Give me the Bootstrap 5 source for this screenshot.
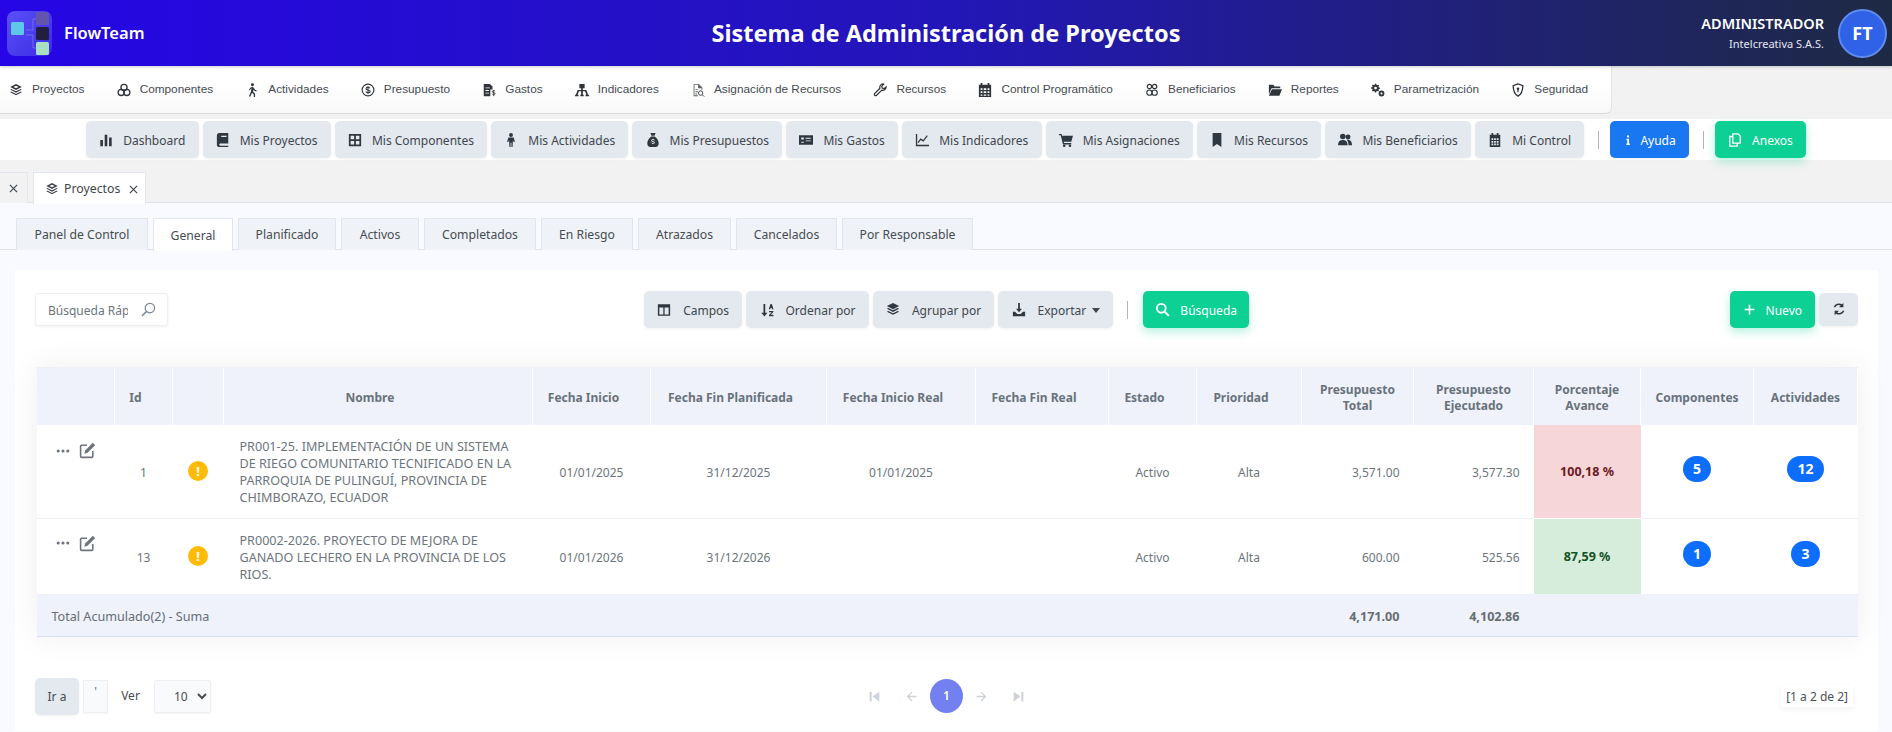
<!DOCTYPE html>
<html lang="es">
<head>
<meta charset="utf-8">
<title>FlowTeam</title>
<link href="https://cdn.jsdelivr.net/npm/bootstrap@5.3.0/dist/css/bootstrap.min.css" rel="stylesheet">
<style>
html,body{height:732px;overflow:hidden}
body{background:#f2f2f2;font-family:"Noto Sans",sans-serif;font-size:12px;color:#6c757d}
.ic{width:14px;height:14px;flex:none;fill:currentColor}
.topbar{height:66px;background:linear-gradient(90deg,#2606e6 0%,#2316b8 50%,#1e2a44 100%);color:#fff;padding:0 5px 0 7px;box-shadow:0 1px 3px rgba(0,0,0,.2);position:relative}
.logo-box{width:45px;height:45px;border-radius:8px;background:linear-gradient(135deg,#5a50f5,#3a2ce8);flex:none}
.brand-name{font-size:16.5px;font-weight:600;margin-left:12px;width:164px}
.sys-title{font-size:23.5px;font-weight:700;flex:1;text-align:center;padding-top:1px;white-space:nowrap}
.user-col{text-align:right;margin-right:14px;width:160px}
.user-name{font-size:14.5px;font-weight:600;line-height:18px}
.user-org{font-size:11px;line-height:18px;margin-top:3px;color:#e6e6f2}
.avatar{width:49px;height:49px;border-radius:50%;background:#2f62e6;border:2px solid #5f8bee;color:#fff;font-weight:700;font-size:18px}
.menu-wrap{height:53px}
.main-menu{width:1612px;height:48px;background:linear-gradient(#fff 0%,#fff 40%,#f8f8f8 100%);border-bottom:1px solid #d8d8d8;border-right:1px solid #e4e4e4;border-bottom-right-radius:6px;padding-left:9px;font-family:"Liberation Sans",sans-serif;font-size:11.8px;color:#444a50}
.menu-item{display:flex;align-items:center;gap:9px;color:#454b52;text-decoration:none;white-space:nowrap;margin-right:32.2px}
.menu-item .ic{width:14px;height:14px;color:#30353b}
.quick-band{height:41px;background:#fff}
.act-btn{height:37px;background:#e3e9ef;border:0;border-radius:5px;padding:2px 13.2px 0;font-size:12px;color:#3f464d;display:inline-flex;align-items:center;gap:10px;white-space:nowrap;box-shadow:0 1px 3px rgba(0,0,0,.06)}
.act-btn:hover{background:#e3e9ef;color:#3f464d}
.act-btn .ic{color:#2f3740;margin-top:-2px}
.act-blue{background:#1a77f2;color:#fff;gap:7px}
.act-blue .ic{color:#fff;width:10px}
.act-blue:hover{background:#1a77f2;color:#fff}
.act-green{background:#0cd094;color:#fff;box-shadow:0 4px 10px rgba(12,208,148,.3)}
.act-green .ic{color:#fff}
.act-green:hover{background:#0cd094;color:#fff}
.vsep{width:1px;height:18px;background:#adb5bd;margin:0 7px 0 10px}
.vsep-t{margin:0 11px 0 10px}
.tab-strip{height:43px;padding-top:12px;border-bottom:1px solid #dfe4ee;gap:5px}
.doc-tab{height:31px;display:flex;align-items:center;border:1px solid #e2e6ee;border-bottom:0;background:#f2f2f2;color:#3f464d}
.doc-tab-x{width:28px;justify-content:center;border-left:0}
.doc-tab-on{width:113px;background:#fff;padding:2px 0 0 11px;gap:5px;margin-bottom:-1px;height:32px;font-size:12.3px}
.doc-tab-on .ic{width:14px;height:14px;margin-top:-2px}
.x-ic{width:9px;height:9px;stroke:#3f464d;stroke-width:1.3;fill:none}
.pane{height:529px;background:#f8faff}
.sub-tabs{height:47px;padding:15px 0 0 16px;gap:5px;border-bottom:1px solid #dee2e6}
.sub-tab{height:32px;display:flex;align-items:center;justify-content:center;background:#eff2f6;border:1px solid #e2e6ec;border-bottom:0;color:#454c53;font-size:12.2px;padding-top:2px}
.sub-on{background:#fff;height:33px}
.w1{width:132px}.w2{width:80px}.w3{width:98px}.w4{width:78px}.w5{width:112px}.w6{width:92px}.w7{width:93px}.w8{width:101px}.w9{width:131px}
.sheet{margin:20px 14px 0 15px;height:461px;background:#fff;padding:21px 20px 0}
.tool-grid{display:grid;grid-template-columns:1fr auto 1fr;align-items:center;height:37px;gap:0}
.quick-search{width:133px;height:33px;border:1px solid #edf0f3;border-radius:3px;box-shadow:0 1px 3px rgba(0,0,0,.06);padding:2px 11px 0 12px;background:#fff}
.quick-input{width:80px;border:0;outline:0;padding:0;background:transparent;font-size:12px;color:#6c757d;font-family:inherit}
.quick-input::placeholder{color:#6c757d;opacity:1}
.quick-search .ic{color:#7b8794;width:15px;height:15px;margin-top:-2px}
.tb-btn{gap:12px}
.sheet .act-green{gap:10px;padding-left:12px;padding-right:12px}
.sheet .act-green .ic{width:15px;height:15px}
.sheet .plus-btn{padding-left:13px;padding-right:13px}
.sheet .plus-btn .ic{width:13px;height:13px}
.caret-btn::after{content:"";border-top:5px solid currentColor;border-left:4.5px solid transparent;border-right:4.5px solid transparent;margin-left:-6px;margin-top:-1px}
.refresh{width:39px;height:33px;justify-content:center;padding:0;margin-left:4px}
.tbl-shell{margin:39px 0 0 1.5px;box-shadow:0 0 30px rgba(0,0,0,.07);border-top:1px solid #eef0f5}
.data-grid{width:100%;table-layout:fixed;border-collapse:collapse;font-size:12px;color:#6c757d;background:#fff}
.data-grid th{background:#eff2fa;color:#69727c;font-weight:700;font-size:12px;line-height:16px;text-align:center;vertical-align:middle;height:57px;border-right:1px solid #fff;padding:2px 4px 0}
.data-grid th.sp{padding-right:20px}
.data-grid td{vertical-align:middle;text-align:center;border-bottom:1px solid #eef0f6;padding:2px 14px 0;line-height:17px}
.r1 td{height:93px}.r2 td{height:76px}
.data-grid td.lf{text-align:left;padding:2px 20px 0 16px;font-size:12.6px}
.data-grid td.rt{text-align:right}
.data-grid td.pct-bad{background:#f7d6d9;color:#6a1a21;font-weight:700;padding:0;border-bottom:1px solid #fff;font-size:12.5px}
.data-grid td.pct-ok{background:#d5edda;color:#135224;font-weight:700;padding:0;border-bottom:0;font-size:12.5px}
.data-grid tfoot td{background:#eff2fa;height:42px;border-bottom:1px solid #d9e2ee;font-weight:700;color:#666d74;font-size:12.6px}
.data-grid tfoot td.tl{text-align:left;font-weight:400;padding-left:15px}
.data-grid td.act-cell{padding:0}
.act-ics{display:flex;align-items:center;gap:9px;padding-left:19px;color:#6c757d}
.pad-a{padding-top:17px}
.pad-b{padding-top:16px}
.act-ics .ic{width:17px;height:17px}
.act-ics .dots{width:14px;height:14px}
.warn-dot{width:20px;height:20px;border-radius:50%;background:#ffbb07;color:#fff;font-weight:700;font-size:13px;line-height:20px;display:inline-block;text-align:center}
.count-pill{display:inline-block;background:#0d6efd;color:#fff;font-weight:700;font-size:14px;line-height:26px;border-radius:13px;padding:0 10px;position:relative;top:-3px;min-width:24px}
.pager{display:grid;grid-template-columns:1fr auto 1fr;align-items:center;margin-top:41px;height:37px}
.goto{width:44px;justify-content:center;padding:2px 0 0;color:#454c53;font-size:12px}
.page-in{width:25px;height:33px;border:1px solid #edf0f3;background:#f9fafb;margin-left:4px;text-align:center;line-height:22px;color:#6c757d;box-shadow:0 1px 2px rgba(0,0,0,.04)}
.ver-lb{width:39px;text-align:center;margin:0 4px 0 3px;color:#454c53;background:#fff}
.sel{width:57px;height:33px;padding:0 0 0 15px;border:1px solid #edf0f3;border-radius:2px;background:#f9fafb;color:#454c53;font-size:12px;font-family:inherit;box-shadow:0 1px 2px rgba(0,0,0,.05)}
.pg-icons{color:#cdd3db;gap:0}
.pg-icons .ic{width:13px;height:13px}
.pg-now{width:33px;height:34px;border-radius:50%;background:#7380f0;color:#fff;font-weight:600;margin:0 12px}
.pg-summary{justify-self:end;padding:3px 5px 1px;margin-right:5px;color:#495057;font-size:12px;background:#fff;box-shadow:0 2px 6px rgba(0,0,0,.06)}
.c-a{width:78px}.c-b{width:58px}.c-c{width:51px}.c-d{width:309px}.c-e{width:118px}.c-f{width:176px}.c-g{width:149px}.c-h{width:133px}.c-i{width:88px}.c-j{width:105px}.c-k{width:112px}.c-l{width:120px}.c-m{width:107px}.c-n{width:113px}.c-o{width:104px}
</style>
</head>
<body>
<svg width="0" height="0" class="position-absolute">
<symbol id="i-layers" viewBox="0 0 16 16"><path d="M8 1 1.500 4.500 8 8l6.500-3.500zM8 3l3 1.500-3 1.500-3-1.500z" fill-rule="evenodd"/><path d="M2.500 6.800 1.500 7.500 8 11l6.500-3.500-1-.7L8 9.500zM2.500 9.800l-1 .7L8 14l6.500-3.500-1-.7L8 12.500z"/></symbol>
<symbol id="i-comp" viewBox="0 0 16 16"><g fill="none" stroke="currentColor" stroke-width="1.500"><circle cx="8" cy="5" r="3.500"/><circle cx="4.800" cy="10.800" r="3.500"/><circle cx="11.200" cy="10.800" r="3.500"/></g></symbol>
<symbol id="i-walk" viewBox="0 0 16 16"><circle cx="8.500" cy="2" r="1.700"/><path d="M8.600 4.300 6 5.500 4.600 8l1 .5 1-2 .9-.3L6.700 10 4.500 15l1.400.6L8 11l2 2v3h1.500v-3.600L9.300 10l.5-2.500.8 1.300 2.400.8.400-1.200-2-.7-1.200-2.100z"/></symbol>
<symbol id="i-dollar" viewBox="0 0 16 16"><circle cx="8" cy="8" r="6.700" fill="none" stroke="currentColor" stroke-width="1.300"/><path d="M10.300 6.200C10 5.200 9 4.900 8 4.900c-1.300 0-2.300.6-2.300 1.600C5.700 8.800 10.500 7.400 10.500 9.600c0 1-1.100 1.500-2.500 1.500-1.200 0-2.100-.5-2.400-1.500M8 3.500v9" fill="none" stroke="currentColor" stroke-width="1.200"/></symbol>
<symbol id="i-gasto" viewBox="0 0 16 16"><path d="M2 1h7l3 3v3.500H9.500V15H2zM4 5v1h5V5zM4 8v1h4V8zM4 11v1h4v-1z" fill-rule="evenodd"/><path d="M15 9.500c-.3-.6-1-.8-1.700-.8-1 0-1.700.5-1.700 1.200 0 1.600 3.500.8 3.500 2.300 0 .7-.8 1.100-1.800 1.100-.8 0-1.500-.3-1.800-1M13.300 8v7" fill="none" stroke="currentColor" stroke-width="1"/></symbol>
<symbol id="i-ind" viewBox="0 0 16 16"><path d="M5 1h6v5H9v2h4l2 5.500h1V15h-4v-1.500h1L11.500 9.500H9v4h1V15H6v-1.500h1v-4H4.500L3 13.500h1V15H0v-1.500h1L3 8h4V6H5z"/></symbol>
<symbol id="i-asig" viewBox="0 0 16 16"><path d="M3 1h6l4 4v3h-1V6H8V2H4v12h4v1H3zM5 7h3v1H5zM5 9.500h3v1H5zM5 12h2v1H5z" opacity=".75"/><circle cx="11" cy="11.500" r="2.500" fill="none" stroke="currentColor"/><path d="m13 13.500 2 2" stroke="currentColor"/></symbol>
<symbol id="i-wrench" viewBox="0 0 16 16"><path d="M11.500 1a3.800 3.800 0 0 0-3.600 5L1.800 12.100a1.500 1.500 0 0 0 2.100 2.100L10 8.100A3.800 3.800 0 0 0 15 4.500l-2.300 2-2.200-.7-.5-2.200 2.200-2.300z" fill="none" stroke="currentColor" stroke-width="1.400"/></symbol>
<symbol id="i-cal" viewBox="0 0 16 16"><path d="M3 0h2v2h6V0h2v2h2v14H1V2h2zM3 6v2h2V6zm3.500 0v2h3V6zM11 6v2h2V6zM3 9.500v2h2v-2zm3.500 0v2h3v-2zm4.500 0v2h2v-2zM3 13v1.500h2V13zm3.500 0v1.500h3V13zm4.500 0v1.500h2V13z" fill-rule="evenodd"/></symbol>
<symbol id="i-benef" viewBox="0 0 16 16"><g fill="none" stroke="currentColor" stroke-width="1.300"><circle cx="5" cy="4" r="2.500"/><circle cx="11" cy="4" r="2.500"/><circle cx="5" cy="11" r="3"/><circle cx="11" cy="11" r="3"/></g></symbol>
<symbol id="i-folder" viewBox="0 0 16 16"><path d="M1 2h5l1.500 2H14v2H4L1 13zM4.500 7H16l-3 7.500H1z"/></symbol>
<symbol id="i-gears" viewBox="0 0 16 16"><path d="M5.500 1h2l.3 1.600 1.500.7 1.300-.9 1 1.300-.9 1.300.5 1.500L13 6.800v1.500l-1.800.3-.6 1.300.9 1.400-1.300 1-1.300-.9-1.400.6-.3 1.500H5.500l-.3-1.700-1.300-.5-1.500.9-1-1.300 1-1.400-.6-1.300L0 8V6.500l1.800-.3.600-1.500-1-1.300 1.300-1.200 1.400 1 1.300-.6zM6.500 5.300a2 2 0 1 0 0 4 2 2 0 0 0 0-4z" fill-rule="evenodd" transform="scale(.8)"/><circle cx="12" cy="12" r="3.300"/><circle cx="12" cy="12" r="1.200" fill="#fff"/></symbol>
<symbol id="i-shield" viewBox="0 0 16 16"><path d="M8 1 2.500 3c0 5 .5 9 5.500 12 5-3 5.500-7 5.500-12z" fill="none" stroke="currentColor" stroke-width="1.500"/><circle cx="8" cy="6.500" r="1.500"/><path d="M7.300 7h1.400v3.500H7.300z"/></symbol>
<symbol id="i-bars" viewBox="0 0 16 16"><path d="M1.500 8h3v7h-3zM6.500 2h3v13h-3zM11.500 5h3v10h-3z"/></symbol>
<symbol id="i-book" viewBox="0 0 16 16"><path d="M4 0h10v12H4.500a1.500 1.500 0 0 0 0 2.500H14V16H4a3 3 0 0 1-3-3V3a3 3 0 0 1 3-3zm2 3v1.500h6V3z" fill-rule="evenodd"/></symbol>
<symbol id="i-grid" viewBox="0 0 16 16"><path d="M1 1h14v14H1zM3 3v4h4V3zm6 0v4h4V3zM3 9v4h4V9zm6 0v4h4V9z" fill-rule="evenodd"/></symbol>
<symbol id="i-person" viewBox="0 0 16 16"><circle cx="8" cy="2.300" r="2.200"/><path d="M5 5h6l1.500 5-1.500.3-.8-2.300-.4 8H8.500V11h-1v5H6.200l-.4-8L5 10.300 3.500 10z"/></symbol>
<symbol id="i-bag" viewBox="0 0 16 16"><path d="M5 0h6l-1.300 3H6.300zM6 4h4c3 2 4.500 5 4.500 8 0 2.500-1.500 4-3.500 4H5c-2 0-3.500-1.500-3.500-4 0-3 1.500-6 4.500-8z"/><path d="M9.700 8.200c-.3-.6-1-.8-1.700-.8-1 0-1.700.5-1.700 1.200 0 1.600 3.500.8 3.500 2.300 0 .7-.8 1.100-1.800 1.100-.8 0-1.500-.3-1.800-1" fill="none" stroke="#fff" stroke-width="1"/></symbol>
<symbol id="i-card" viewBox="0 0 16 16"><path d="M0 2.500h16v11H0zM2.500 5v2.500h3V5zM7.500 5.500v1h6v-1zM7.500 8.500v1h6v-1zM2.500 10v1h3v-1z" fill-rule="evenodd"/></symbol>
<symbol id="i-chart" viewBox="0 0 16 16"><path d="M1 1h1.500v12.500H16V15H1z"/><path d="m3.500 11 3-4 3 2 4.500-6" fill="none" stroke="currentColor" stroke-width="1.400"/></symbol>
<symbol id="i-cart" viewBox="0 0 16 16"><path d="M0 1h3l.5 2H16l-2 7H5.500l.3 1.500H14V13H4.500L2 2.500H0z"/><circle cx="6" cy="14.500" r="1.500"/><circle cx="12.500" cy="14.500" r="1.500"/></symbol>
<symbol id="i-mark" viewBox="0 0 16 16"><path d="M3 0h10v16l-5-3.500L3 16z"/></symbol>
<symbol id="i-people" viewBox="0 0 16 16"><circle cx="5.500" cy="4" r="3.200"/><circle cx="11.500" cy="4.500" r="2.800"/><path d="M0 14c0-4 2-6 5.500-6S11 10 11 14zM12 14c0-2.500-.6-4.500-2-6 4-1 6 2 6 6z"/></symbol>
<symbol id="i-calf" viewBox="0 0 16 16"><path d="M4 0h2v2h4V0h2v2h2v14H2V2h2zM4 6v2h2V6zm3 0v2h2V6zm3 0v2h2V6zM4 9v2h2V9zm3 0v2h2V9zm3 0v2h2V9zM4 12v2h2v-2zm3 0v2h2v-2zm3 0v2h2v-2z" fill-rule="evenodd"/></symbol>
<symbol id="i-info" viewBox="0 0 16 16"><circle cx="8" cy="2.200" r="1.800"/><path d="M5.500 6h4.200v7.500h1.300V16H5.500v-2.500h1.300v-5H5.500z"/></symbol>
<symbol id="i-copy" viewBox="0 0 16 16"><g fill="none" stroke="currentColor" stroke-width="1.500"><path d="M5.500 1h6l2.500 2.500V11.500H5.500z"/><path d="M5.500 4H2v11h8.500v-3.500"/></g></symbol>
<symbol id="i-cols" viewBox="0 0 16 16"><path d="M1 1.500h14v13H1zM2.700 5v8h4.500V5zm6 0v8h4.600V5z" fill-rule="evenodd"/></symbol>
<symbol id="i-sort" viewBox="0 0 16 16"><path d="M4 1h2v10h2.500L5 15.500 1.500 11H4zM10 7l2-6h1.500l2 6h-1.500l-.3-1h-1.900l-.3 1zM10.300 9h5v1.300l-3 3.200h3V15h-5v-1.300l3-3.200h-3z"/></symbol>
<symbol id="i-stack" viewBox="0 0 16 16"><path d="M8 0 1 3.500 8 7l7-3.500z"/><path d="m2.700 5.600-1.700 1L8 10.200l7-3.600-1.700-1L8 8.300z"/><path d="m2.700 9-1.700 1L8 13.500 15 10l-1.700-1L8 11.700z"/></symbol>
<symbol id="i-dl" viewBox="0 0 16 16"><path d="M7 0h2v6.500h2.500L8 10.500l-3.500-4H7z"/><path d="M1 10h2.500l2.500 2.500h4l2.500-2.500H15v5H1z"/></symbol>
<symbol id="i-search" viewBox="0 0 16 16"><circle cx="6.700" cy="6.700" r="4.700" fill="none" stroke="currentColor" stroke-width="2"/><path d="m10.300 10.300 4.500 4.500" stroke="currentColor" stroke-width="2.200"/></symbol>
<symbol id="i-searchl" viewBox="0 0 16 16"><circle cx="9.500" cy="6.500" r="5" fill="none" stroke="currentColor" stroke-width="1.300"/><path d="m6 10-5 5" stroke="currentColor" stroke-width="1.600"/></symbol>
<symbol id="i-plus" viewBox="0 0 16 16"><path d="M7 2h2v5h5v2H9v5H7V9H2V7h5z"/></symbol>
<symbol id="i-sync" viewBox="0 0 16 16"><path d="M13 1v5H8l2-2a4.500 4.500 0 0 0-6.300 2H1.800A6.500 6.500 0 0 1 11.500 2.700zM3 15v-5h5l-2 2a4.500 4.500 0 0 0 6.300-2h1.900a6.500 6.500 0 0 1-9.700 3.300z"/></symbol>
<symbol id="i-dots" viewBox="0 0 16 16"><circle cx="2.500" cy="8" r="1.800"/><circle cx="8" cy="8" r="1.800"/><circle cx="13.500" cy="8" r="1.800"/></symbol>
<symbol id="i-edit" viewBox="0 0 16 16"><path d="M7.500 3H2.500A1 1 0 0 0 1.500 4v9.500a1 1 0 0 0 1 1H12a1 1 0 0 0 1-1V8.500" fill="none" stroke="currentColor" stroke-width="1.500"/><path d="M13 .8 15.200 3 8 10.200l-3 .8.800-3z"/></symbol>
<symbol id="i-first" viewBox="0 0 16 16"><path d="M2 2h2.500v12H2zM14 2v12L5.500 8z"/></symbol>
<symbol id="i-last" viewBox="0 0 16 16"><path d="M11.500 2H14v12h-2.500zM2 2v12l8.500-6z"/></symbol>
<symbol id="i-prev" viewBox="0 0 16 16"><path d="M8 2 2 8l6 6 1.200-1.200L5.200 8.900H14V7.100H5.200l4-3.900z"/></symbol>
<symbol id="i-next" viewBox="0 0 16 16"><path d="m8 2 6 6-6 6-1.200-1.200 4-3.900H2V7.100h8.800l-4-3.900z"/></symbol>
<symbol id="i-x" viewBox="0 0 10 10"><path d="m1 1 8 8M9 1 1 9"/></symbol>
</svg>

<header class="topbar d-flex align-items-center">
  <div class="logo-box">
    <svg width="45" height="45" viewBox="0 0 45 45"><path d="M19 19h7V8h4M19 24h7v13h4" fill="none" stroke="#7d78e0" stroke-width=".8"/><rect x="4" y="11" width="13" height="13" rx="1.500" fill="#5ec8e8"/><rect x="29" y="1" width="13" height="13" rx="1.500" fill="#6355ad"/><rect x="29" y="16" width="13" height="13" rx="1.500" fill="#211f3d"/><rect x="29" y="31" width="13" height="13" rx="1.500" fill="#a9dfc3"/></svg>
  </div>
  <div class="brand-name">FlowTeam</div>
  <div class="sys-title">Sistema de Administración de Proyectos</div>
  <div class="user-col">
    <div class="user-name">ADMINISTRADOR</div>
    <div class="user-org">Intelcreativa S.A.S.</div>
  </div>
  <div class="avatar d-flex align-items-center justify-content-center">FT</div>
</header>

<div class="menu-wrap">
<nav class="main-menu d-flex align-items-center">
  <a class="menu-item" href="#"><svg class="ic"><use href="#i-layers"/></svg>Proyectos</a>
  <a class="menu-item" href="#"><svg class="ic"><use href="#i-comp"/></svg>Componentes</a>
  <a class="menu-item" href="#"><svg class="ic"><use href="#i-walk"/></svg>Actividades</a>
  <a class="menu-item" href="#"><svg class="ic"><use href="#i-dollar"/></svg>Presupuesto</a>
  <a class="menu-item" href="#"><svg class="ic"><use href="#i-gasto"/></svg>Gastos</a>
  <a class="menu-item" href="#"><svg class="ic"><use href="#i-ind"/></svg>Indicadores</a>
  <a class="menu-item" href="#"><svg class="ic"><use href="#i-asig"/></svg>Asignación de Recursos</a>
  <a class="menu-item" href="#"><svg class="ic"><use href="#i-wrench"/></svg>Recursos</a>
  <a class="menu-item" href="#"><svg class="ic"><use href="#i-cal"/></svg>Control Programático</a>
  <a class="menu-item" href="#"><svg class="ic"><use href="#i-benef"/></svg>Beneficiarios</a>
  <a class="menu-item" href="#"><svg class="ic"><use href="#i-folder"/></svg>Reportes</a>
  <a class="menu-item" href="#"><svg class="ic"><use href="#i-gears"/></svg>Parametrización</a>
  <a class="menu-item" href="#"><svg class="ic"><use href="#i-shield"/></svg>Seguridad</a>
</nav>
</div>

<div class="quick-band d-flex align-items-center justify-content-center gap-1">
  <button class="btn act-btn"><svg class="ic"><use href="#i-bars"/></svg>Dashboard</button>
  <button class="btn act-btn"><svg class="ic"><use href="#i-book"/></svg>Mis Proyectos</button>
  <button class="btn act-btn"><svg class="ic"><use href="#i-grid"/></svg>Mis Componentes</button>
  <button class="btn act-btn"><svg class="ic"><use href="#i-person"/></svg>Mis Actividades</button>
  <button class="btn act-btn"><svg class="ic"><use href="#i-bag"/></svg>Mis Presupuestos</button>
  <button class="btn act-btn"><svg class="ic"><use href="#i-card"/></svg>Mis Gastos</button>
  <button class="btn act-btn"><svg class="ic"><use href="#i-chart"/></svg>Mis Indicadores</button>
  <button class="btn act-btn"><svg class="ic"><use href="#i-cart"/></svg>Mis Asignaciones</button>
  <button class="btn act-btn"><svg class="ic"><use href="#i-mark"/></svg>Mis Recursos</button>
  <button class="btn act-btn"><svg class="ic"><use href="#i-people"/></svg>Mis Beneficiarios</button>
  <button class="btn act-btn"><svg class="ic"><use href="#i-calf"/></svg>Mi Control</button>
  <span class="vsep"></span>
  <button class="btn act-btn act-blue"><svg class="ic"><use href="#i-info"/></svg>Ayuda</button>
  <span class="vsep"></span>
  <button class="btn act-btn act-green"><svg class="ic"><use href="#i-copy"/></svg>Anexos</button>
</div>

<div class="tab-strip d-flex">
  <div class="doc-tab doc-tab-x"><svg class="x-ic"><use href="#i-x"/></svg></div>
  <div class="doc-tab doc-tab-on"><svg class="ic"><use href="#i-layers"/></svg>Proyectos<svg class="x-ic ms-1"><use href="#i-x"/></svg></div>
</div>

<main class="pane">
  <div class="sub-tabs d-flex">
    <div class="sub-tab w1">Panel de Control</div>
    <div class="sub-tab sub-on w2">General</div>
    <div class="sub-tab w3">Planificado</div>
    <div class="sub-tab w4">Activos</div>
    <div class="sub-tab w5">Completados</div>
    <div class="sub-tab w6">En Riesgo</div>
    <div class="sub-tab w7">Atrazados</div>
    <div class="sub-tab w8">Cancelados</div>
    <div class="sub-tab w9">Por Responsable</div>
  </div>
  <section class="sheet">
    <div class="tool-grid">
      <div class="quick-search d-flex align-items-center justify-content-between"><input class="quick-input" type="text" placeholder="Búsqueda Rápida" aria-label="Búsqueda Rápida"><svg class="ic"><use href="#i-searchl"/></svg></div>
      <div class="d-flex align-items-center gap-1">
        <button class="btn act-btn tb-btn"><svg class="ic"><use href="#i-cols"/></svg>Campos</button>
        <button class="btn act-btn tb-btn"><svg class="ic"><use href="#i-sort"/></svg>Ordenar por</button>
        <button class="btn act-btn tb-btn"><svg class="ic"><use href="#i-stack"/></svg>Agrupar por</button>
        <button class="btn act-btn tb-btn caret-btn"><svg class="ic"><use href="#i-dl"/></svg>Exportar</button>
        <span class="vsep vsep-t"></span>
        <button class="btn act-btn act-green tb-btn"><svg class="ic"><use href="#i-search"/></svg>Búsqueda</button>
      </div>
      <div class="d-flex align-items-center justify-content-end">
        <button class="btn act-btn act-green tb-btn plus-btn"><svg class="ic"><use href="#i-plus"/></svg>Nuevo</button>
        <button class="btn act-btn refresh"><svg class="ic"><use href="#i-sync"/></svg></button>
      </div>
    </div>

    <div class="tbl-shell">
    <table class="data-grid">
      <colgroup>
        <col class="c-a"><col class="c-b"><col class="c-c"><col class="c-d"><col class="c-e"><col class="c-f"><col class="c-g"><col class="c-h"><col class="c-i"><col class="c-j"><col class="c-k"><col class="c-l"><col class="c-m"><col class="c-n"><col class="c-o">
      </colgroup>
      <thead>
        <tr><th></th><th class="sp">Id</th><th></th><th class="sp">Nombre</th><th class="sp">Fecha Inicio</th><th class="sp">Fecha Fin Planificada</th><th class="sp">Fecha Inicio Real</th><th class="sp">Fecha Fin Real</th><th class="sp">Estado</th><th class="sp">Prioridad</th><th>Presupuesto<br>Total</th><th>Presupuesto<br>Ejecutado</th><th>Porcentaje<br>Avance</th><th>Componentes</th><th>Actividades</th></tr>
      </thead>
      <tbody>
        <tr class="r1">
          <td class="act-cell align-top"><div class="act-ics pad-a"><svg class="ic dots"><use href="#i-dots"/></svg><svg class="ic"><use href="#i-edit"/></svg></div></td>
          <td>1</td><td class="p-0"><span class="warn-dot">!</span></td>
          <td class="lf">PR001-25. IMPLEMENTACIÓN DE UN SISTEMA DE RIEGO COMUNITARIO TECNIFICADO EN LA PARROQUIA DE PULINGUÍ, PROVINCIA DE CHIMBORAZO, ECUADOR</td>
          <td>01/01/2025</td><td>31/12/2025</td><td>01/01/2025</td><td></td><td>Activo</td><td>Alta</td>
          <td class="rt">3,571.00</td><td class="rt">3,577.30</td><td class="pct-bad">100,18 %</td>
          <td><span class="count-pill">5</span></td><td><span class="count-pill">12</span></td>
        </tr>
        <tr class="r2">
          <td class="act-cell align-top"><div class="act-ics pad-b"><svg class="ic dots"><use href="#i-dots"/></svg><svg class="ic"><use href="#i-edit"/></svg></div></td>
          <td>13</td><td class="p-0"><span class="warn-dot">!</span></td>
          <td class="lf">PR0002-2026. PROYECTO DE MEJORA DE GANADO LECHERO EN LA PROVINCIA DE LOS RIOS.</td>
          <td>01/01/2026</td><td>31/12/2026</td><td></td><td></td><td>Activo</td><td>Alta</td>
          <td class="rt">600.00</td><td class="rt">525.56</td><td class="pct-ok">87,59 %</td>
          <td><span class="count-pill">1</span></td><td><span class="count-pill">3</span></td>
        </tr>
      </tbody>
      <tfoot>
        <tr><td class="tl" colspan="4">Total Acumulado(2) - Suma</td><td colspan="6"></td><td class="rt">4,171.00</td><td class="rt">4,102.86</td><td colspan="3"></td></tr>
      </tfoot>
    </table>
    </div>

    <div class="pager">
      <div class="d-flex align-items-center">
        <button class="btn act-btn goto">Ir a</button>
        <div class="page-in">'</div>
        <div class="ver-lb">Ver</div>
        <select class="sel"><option>10</option></select>
      </div>
      <div class="pg-icons d-flex align-items-center">
        <svg class="ic me-4"><use href="#i-first"/></svg><svg class="ic"><use href="#i-prev"/></svg>
        <div class="pg-now d-flex align-items-center justify-content-center">1</div>
        <svg class="ic me-4"><use href="#i-next"/></svg><svg class="ic"><use href="#i-last"/></svg>
      </div>
      <div class="pg-summary">[1 a 2 de 2]</div>
    </div>
  </section>
</main>
<script src="https://cdn.jsdelivr.net/npm/bootstrap@5.3.0/dist/js/bootstrap.bundle.min.js"></script>
</body>
</html>
